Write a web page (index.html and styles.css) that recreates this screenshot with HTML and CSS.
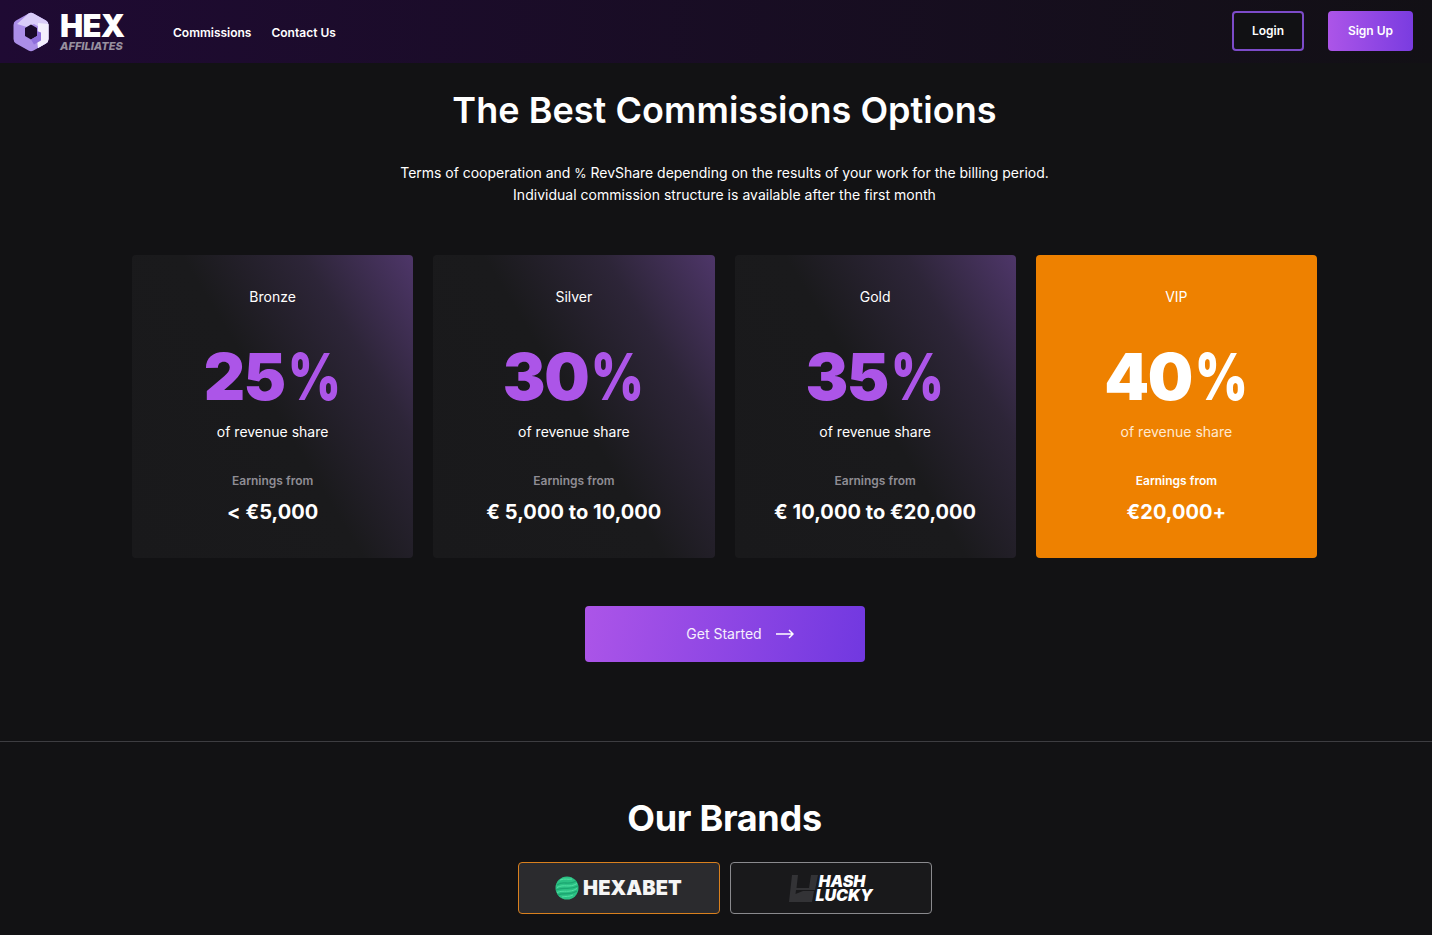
FILE: index.html
```html
<!DOCTYPE html>
<html lang="en">
<head>
  <meta charset="UTF-8">
  <title>Hex Affiliates</title>
  <link rel="stylesheet" href="styles.css">
</head>
<body>

  <header class="topbar">
    <div class="logo">
      <svg class="logo-mark" width="36" height="40" viewBox="0 0 36 40">
        <path d="M15.500 1.400q2.500-1.400 5 0l12.500 7.200q2.500 1.400 2.500 4.300v14.200q0 2.900-2.500 4.300l-12.500 7.200q-2.500 1.400-5 0l-12.500-7.200q-2.500-1.400-2.500-4.300v-14.200q0-2.900 2.500-4.300z" fill="#ab8ee8"/>
        <path d="M15.500 1.400q2.500-1.400 5 0l12.500 7.200q2.500 1.400 2.500 4.300v14.200q0 2.900-2.500 4.300l-8 4.600-1-9 4-3v-8l-7-4-7 3-10-3z" fill="#d9ccf8"/>
        <path d="M25 11l10.500 1v15q0 3-2.500 4.300l-8 4.600-1-12.900 1-4z" fill="#f3effd"/>
        <path d="M12 16l6-3.500 6 3.500v8l-6 3.500-6-3.500z" fill="#190a2a"/>
        <path d="M24 24l-6 3.500 3 5 7-4v-8l-4-1.500z" fill="#8f6fdc"/>
      </svg>
      <div class="logo-text">
        <div class="logo-hex">HEX</div>
        <div class="logo-sub">AFFILIATES</div>
      </div>
    </div>
    <nav class="nav">
      <a>Commissions</a>
      <a>Contact Us</a>
    </nav>
    <div class="auth">
      <button class="btn-login">Login</button>
      <button class="btn-signup">Sign Up</button>
    </div>
  </header>

  <main class="content">
    <h1 class="title">The Best Commissions Options</h1>
    <p class="intro"><span class="intro-top">Terms of cooperation and <span class="pc">%</span> RevShare depending on the results of your work for the billing period.</span><br>Individual commission structure is available after the first month</p>

    <div class="cards">
      <div class="card">
        <div class="tier">Bronze</div>
        <div class="pct">25<span class="pct-sign">%</span></div>
        <div class="share">of revenue share</div>
        <div class="from">Earnings from</div>
        <div class="amount">&lt; €5,000</div>
      </div>
      <div class="card">
        <div class="tier">Silver</div>
        <div class="pct">30<span class="pct-sign">%</span></div>
        <div class="share">of revenue share</div>
        <div class="from">Earnings from</div>
        <div class="amount">€ 5,000 to 10,000</div>
      </div>
      <div class="card">
        <div class="tier">Gold</div>
        <div class="pct">35<span class="pct-sign">%</span></div>
        <div class="share">of revenue share</div>
        <div class="from">Earnings from</div>
        <div class="amount">€ 10,000 to €20,000</div>
      </div>
      <div class="card vip">
        <div class="tier">VIP</div>
        <div class="pct">40<span class="pct-sign">%</span></div>
        <div class="share">of revenue share</div>
        <div class="from">Earnings from</div>
        <div class="amount">€20,000+</div>
      </div>
    </div>

    <div class="cta-row">
      <button class="cta">Get Started
        <svg class="cta-arrow" width="18" height="10" viewBox="0 0 18 10" fill="none" stroke="#fff" stroke-width="1.5">
          <path d="M0 5H17M13 1l4 4-4 4"/>
        </svg>
      </button>
    </div>
  </main>

  <section class="brands">
    <div class="brands-inner">
      <h2 class="brands-title">Our Brands</h2>
      <div class="brand-list">
        <div class="brand active">
          <svg width="24" height="24" viewBox="0 0 24 24">
            <circle cx="12" cy="12" r="11.500" fill="#2cc184"/>
            <path d="M2 9c6-5 11 1 19-4M1 14c7-4 13 1 22-4M3 19c6-3 11 1 19-4" fill="none" stroke="#1ca671" stroke-width="1.400"/>
            <path d="M5 4c5-2 8 0 12-1M2 11.500c7-4 12 1 20-4M2 16.500c7-3 12 1 20-4M7 21c4-1 7 0 11-2" fill="none" stroke="#52e0a4" stroke-width="1"/>
          </svg>
          <span class="hexabet">HEXABET</span>
        </div>
        <div class="brand">
          <svg class="hash-mark" width="29" height="27" viewBox="0 0 29 27" fill="#333336">
            <polygon points="3,0 9,0 7.500,13 20,13 22,0 29,0 26,15 7,15 6.500,19 14,16 25,16 23,27 0,27"/>
          </svg>
          <span class="hash">HASH<br><span class="hash-low">LUCKY</span></span>
        </div>
      </div>
    </div>
  </section>

</body>
</html>
```

FILE: styles.css
```css
* { box-sizing: border-box; }
html, body { margin: 0; height: 935px; overflow: hidden; }
body { background: #121214; color: #fff; font-family: Inter, "Liberation Sans", sans-serif; }

.topbar { display: flex; align-items: center; height: 63px; padding: 0 19px 0 13px; background: linear-gradient(90deg, #1f0a33, #121015); }
.logo { display: flex; align-items: center; gap: 11px; width: 160px; }
.logo-text { line-height: 1; }
.logo-hex { font-size: 31px; font-weight: 900; height: 27px; line-height: 27px; letter-spacing: -0.8px; }
.logo-sub { font-size: 11px; font-weight: 800; font-style: italic; color: #98909f; margin-top: 2px; }
.nav { display: flex; gap: 20px; margin-top: 2px; font-size: 12px; font-weight: 600; }
.auth { display: flex; align-items: center; gap: 24px; margin-left: auto; margin-bottom: 2px; }
.auth button { color: #fff; font-family: inherit; font-size: 12px; font-weight: 600; border-radius: 4px; }
.btn-login { width: 72px; height: 40px; background: #111114; border: 2px solid #7c4bc9; }
.btn-signup { width: 85px; height: 40px; border: none; background: linear-gradient(90deg, #ac55e8, #7a3ce0); }

.content { width: 1185px; margin-left: 132px; }
.title { margin: 24px 0 0; font-size: 36px; font-weight: 600; line-height: 46px; letter-spacing: 0.04px; text-align: center; }
.intro { margin: 29px 0 0; font-size: 14px; line-height: 22px; letter-spacing: 0.02px; text-align: center; }
.intro-top { letter-spacing: -0.02px; }
.pc { font-size: 12.5px; line-height: 1; }

.cards { display: grid; grid-template-columns: repeat(4, 1fr); gap: 20px; margin-top: 49px; }
.card { height: 303px; padding-top: 33px; text-align: center; border-radius: 4px; background: linear-gradient(239deg, #4e3669 0%, #2d2538 24%, #1a1a1c 50%, #19191b 100%); }
.tier { font-size: 14px; line-height: 18px; }
.pct { height: 78px; margin-top: 32px; font-size: 64px; font-weight: 900; line-height: 78px; letter-spacing: -1.5px; color: #ac55e8; }
.pct-sign { display: inline-block; margin-left: 3px; margin-right: -13px; letter-spacing: 0; transform: scaleX(0.79); transform-origin: left; }
.share { margin-top: 7px; font-size: 14px; line-height: 18px; }
.from { margin-top: 32px; font-size: 12px; font-weight: 600; line-height: 16px; color: #8f8d94; }
.amount { margin-top: 10px; font-size: 20px; font-weight: 700; line-height: 26px; letter-spacing: 0.05px; }
.vip { background: #ee8100; }
.vip .pct { color: #fff; }
.vip .share { color: #ffe9d0; }
.vip .from { color: #fff; }

.cta-row { display: flex; justify-content: center; margin-top: 48px; }
.cta { display: flex; align-items: center; justify-content: center; gap: 14px; width: 280px; height: 56px; padding: 0 0 2px 31px; border: none; border-radius: 4px; color: #f6effd; font-family: inherit; font-size: 14px; background: linear-gradient(100deg, #ac55e8, #7138e0); }
.cta-arrow { margin-top: 2px; }

.brands { margin-top: 79px; border-top: 1px solid #3d3d41; }
.brands-inner { width: 1185px; margin-left: 132px; }
.brands-title { margin: 53px 0 0; font-size: 36px; font-weight: 700; line-height: 46px; letter-spacing: -0.3px; text-align: center; }
.brand-list { display: flex; justify-content: center; gap: 10px; margin-top: 21px; }
.brand { display: flex; align-items: center; justify-content: center; width: 202px; height: 52px; border: 1px solid #8a8a8e; border-radius: 4px; background: #19191b; }
.brand.active { gap: 4px; border-color: #d9801e; background: #2b2b2e; }
.hexabet { font-size: 20px; font-weight: 900; letter-spacing: 0.1px; color: #f5f5f5; }
.hash-mark { margin-left: 1px; }
.hash { display: block; font-size: 16px; font-weight: 900; font-style: italic; line-height: 14px; }
.hash-low { margin-left: -3px; }
```
